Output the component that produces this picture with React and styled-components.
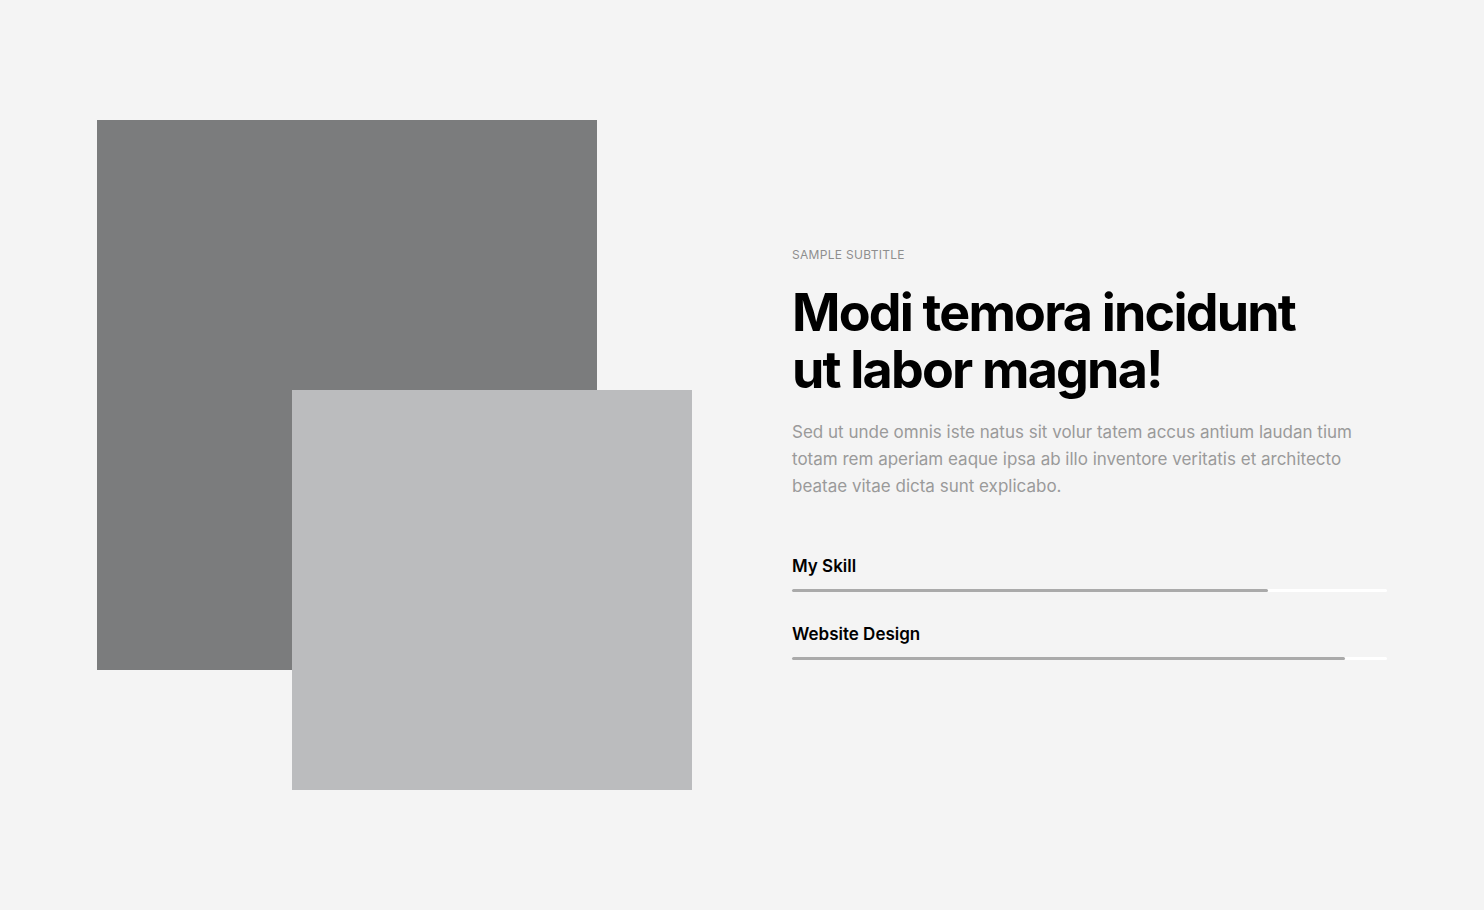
import React from 'react'
import styled, { createGlobalStyle } from 'styled-components'

const GlobalStyle = createGlobalStyle`
  * { box-sizing: border-box; }
  body {
    margin: 0;
    background: #f4f4f4;
    font-family: Inter, "Noto Sans", sans-serif;
  }
`;

const Section = styled.section`
  min-height: 910px;
  padding: 120px 0;
`;

const Container = styled.div`
  width: 1290px;
  margin: 0 auto;
  display: grid;
  grid-template-columns: 595px 595px;
  column-gap: 100px;
  align-items: center;
`;

const Collage = styled.div`
  display: grid;
  grid-template-columns: 195px 305px 95px;
  grid-template-rows: 270px 280px 120px;
`;

const Shape = styled.div`
  background: ${p => p.$color};
  grid-column: ${p => p.$col};
  grid-row: ${p => p.$row};
`;

const Content = styled.div`
  display: flex;
  flex-direction: column;
  padding-bottom: 3px;
`;

const Subtitle = styled.div`
  font-size: 12px;
  text-transform: uppercase;
  color: #8e8e8e;
  letter-spacing: 0.3px;
  margin-bottom: 22px;
`;

const Heading = styled.h2`
  margin: 0 0 21px;
  font-size: 52px;
  line-height: 57px;
  font-weight: 700;
  letter-spacing: -1.8px;
  color: #000;
`;

const Text = styled.p`
  margin: 0 0 56px;
  font-size: 17px;
  line-height: 27px;
  color: #9a9a9a;
`;

const Skills = styled.div`
  display: flex;
  flex-direction: column;
  gap: 32px;
`;

const Skill = styled.div`
  display: flex;
  flex-direction: column;
  gap: 13px;
`;

const SkillName = styled.div`
  font-size: 17px;
  font-weight: 600;
  color: #000;
  line-height: 20px;
`;

const Track = styled.div`
  height: 3px;
  background: #ffffff;
  border-radius: 2px;
`;

const Fill = styled.div`
  height: 100%;
  background: #aaaaaa;
  border-radius: 2px;
`;

const skills = [
  { name: 'My Skill', value: 80 },
  { name: 'Website Design', value: 93 },
];

export default function App() {
  return (
    <>
      <GlobalStyle />
      <Section>
        <Container>
          <Collage>
            <Shape $color="#7b7c7d" $col="1 / 3" $row="1 / 3" />
            <Shape $color="#bbbcbe" $col="2 / 4" $row="2 / 4" />
          </Collage>
          <Content>
            <Subtitle>Sample subtitle</Subtitle>
            <Heading>Modi temora incidunt<br />ut labor magna!</Heading>
            <Text>
              Sed ut unde omnis iste natus sit volur tatem accus antium laudan tium
              totam rem aperiam eaque ipsa ab illo inventore veritatis et architecto
              beatae vitae dicta sunt explicabo.
            </Text>
            <Skills>
              {skills.map(s => (
                <Skill key={s.name}>
                  <SkillName>{s.name}</SkillName>
                  <Track>
                    <Fill style={{ width: `${s.value}%` }} />
                  </Track>
                </Skill>
              ))}
            </Skills>
          </Content>
        </Container>
      </Section>
    </>
  )
}
